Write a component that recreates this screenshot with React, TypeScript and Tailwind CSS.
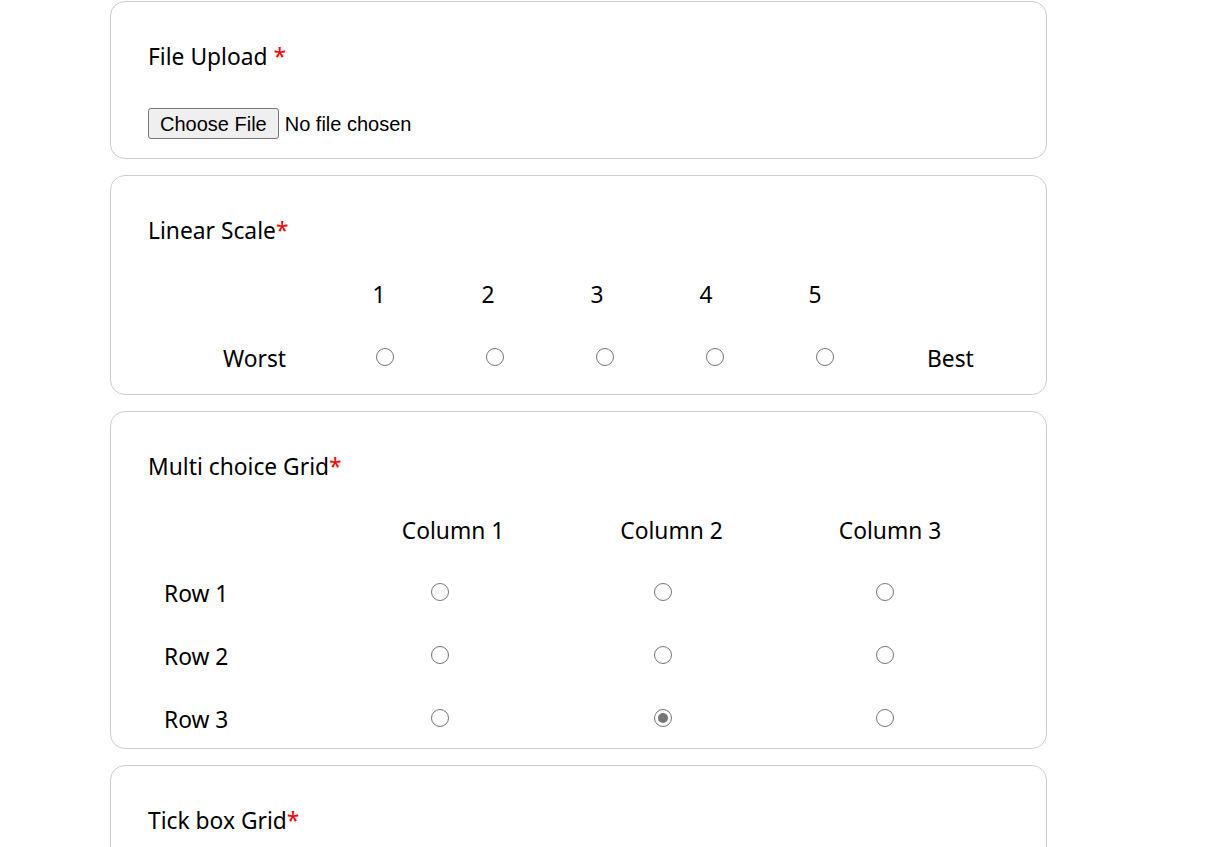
const font = { fontFamily: '"Noto Sans", "Open Sans", sans-serif' };

function Radio({ checked = false }: { checked?: boolean }) {
  return (
    <span className="mb-[4px] flex h-[18px] w-[18px] items-center justify-center rounded-full border-[1.75px] border-[#767676] bg-white">
      {checked && <span className="h-[10px] w-[10px] rounded-full bg-[#767676]" />}
    </span>
  );
}

function Card({ children, className = "" }: { children: React.ReactNode; className?: string }) {
  return (
    <div className={`w-[937px] rounded-[15px] border border-[#cccccc] bg-white pl-[37px] pt-[41px] ${className}`}>
      {children}
    </div>
  );
}

function Title({ text, spaced = false }: { text: string; spaced?: boolean }) {
  return (
    <div className="h-[28px] text-[22.8px] leading-[28px] text-black">
      {text}
      {spaced ? " " : ""}
      <span className="text-[#ff0000]">*</span>
    </div>
  );
}

const columns = ["Column 1", "Column 2", "Column 3"];
const rows = [
  { label: "Row 1", checked: -1 },
  { label: "Row 2", checked: -1 },
  { label: "Row 3", checked: 1 },
];

export default function App() {
  return (
    <div className="min-h-screen bg-white pt-[1px]" style={font}>
      <div className="ml-[110px] flex flex-col gap-[16px]">
        <Card className="pb-[19px]">
          <Title text="File Upload" spaced />
          <div className="mt-[37px] flex items-center" style={{ fontFamily: '"Liberation Sans", Arial, sans-serif' }}>
            <button className="h-[31px] rounded-[3px] border border-[#767676] bg-[#efefef] px-[11px] text-[20px] leading-[24px] text-black">
              Choose File
            </button>
            <span className="ml-[6px] text-[20px] leading-[24px] text-black">No file chosen</span>
          </div>
        </Card>

        <Card className="pb-[22.5px]">
          <Title text="Linear Scale" />
          <div className="mt-[36px] flex h-[28px] items-center text-[22.8px] leading-[28px]">
            <div className="w-[176.5px] shrink-0" />
            {[1, 2, 3, 4, 5].map((n) => (
              <div key={n} className="w-[109px] shrink-0 text-center">
                {n}
              </div>
            ))}
          </div>
          <div className="mt-[34px] flex h-[28px] items-center text-[22.8px] leading-[28px]">
            <div className="w-[182px] shrink-0 pl-[75px] pt-[4px]">Worst</div>
            {[1, 2, 3, 4, 5].map((n) => (
              <div key={n} className="flex w-[110px] shrink-0 justify-center pt-[3px]">
                <Radio />
              </div>
            ))}
            <div className="shrink-0 pl-[47px] pt-[4px]">Best</div>
          </div>
        </Card>

        <Card className="pb-[14.5px]">
          <Title text="Multi choice Grid" />
          <div className="mt-[36px] flex h-[28px] items-center text-[22.8px] leading-[28px]">
            <div className="w-[195.75px] shrink-0" />
            {columns.map((c) => (
              <div key={c} className="w-[218.5px] shrink-0 text-center">
                {c}
              </div>
            ))}
          </div>
          {rows.map((r) => (
            <div key={r.label} className="mt-[35px] flex h-[28px] items-center text-[22.8px] leading-[28px]">
              <div className="w-[180.75px] shrink-0 pl-[16px]">{r.label}</div>
              {columns.map((c, i) => (
                <div key={c} className="flex w-[222.5px] shrink-0 justify-center">
                  <Radio checked={r.checked === i} />
                </div>
              ))}
            </div>
          ))}
        </Card>

        <Card className="h-[120px]">
          <Title text="Tick box Grid" />
        </Card>
      </div>
    </div>
  );
}
